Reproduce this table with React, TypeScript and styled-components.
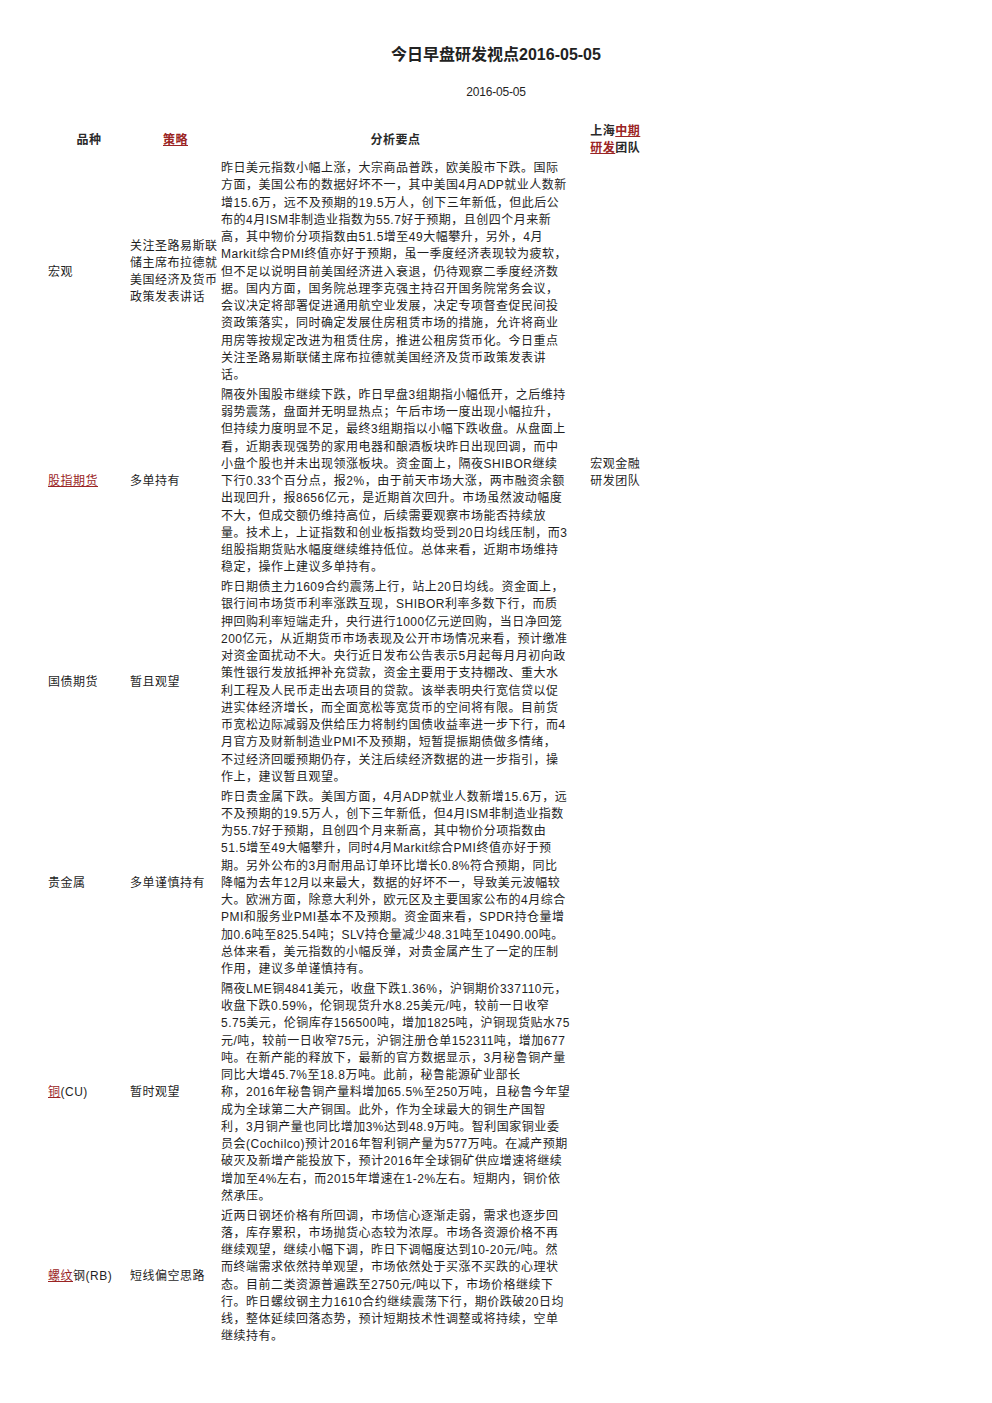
import React from "react";
import styled, { createGlobalStyle } from "styled-components";

const GlobalStyle = createGlobalStyle`
  html, body { margin: 0; padding: 0; background: #ffffff; }
  body {
    font-family: "Liberation Sans", "Noto Sans CJK SC", sans-serif;
    color: #1f1f1f;
  }
`;

const Page = styled.div`
  width: 992px;
  padding-top: 45px;
  padding-bottom: 40px;
`;

const Title = styled.h1`
  margin: 0;
  font-size: 16px;
  font-weight: 700;
  line-height: 20px;
  text-align: center;
  color: #222;
`;

const DateLine = styled.div`
  margin-top: 18.5px;
  font-size: 12px;
  line-height: 17px;
  text-align: center;
  letter-spacing: -0.2px;
`;

const Table = styled.table`
  margin-top: 22px;
  margin-left: 48px;
  border-collapse: collapse;
  table-layout: fixed;
  font-size: 12px;
  line-height: 17.25px;
  letter-spacing: 0.5px;
`;

const Col = styled.col<{ $w: number }>`
  width: ${(p) => p.$w}px;
`;

const Th = styled.th<{ $align?: string; $pr?: number }>`
  padding: 0.5px ${(p) => p.$pr || 0}px 2px 0;
  font-weight: 700;
  text-align: ${(p) => p.$align || "center"};
  vertical-align: middle;
  color: #2a2a2a;
`;

const Td = styled.td<{ $pr?: number }>`
  padding: 0.5px ${(p) => p.$pr || 0}px 2px 0;
  text-align: left;
  vertical-align: middle;
  white-space: nowrap;
`;

const Link = styled.span`
  color: #9a2424;
  text-decoration: underline;
`;

const Lines: React.FC<{ lines: string[] }> = ({ lines }) => (
  <>
    {lines.map((l, i) => (
      <React.Fragment key={i}>
        {l}
        {i < lines.length - 1 && <br />}
      </React.Fragment>
    ))}
  </>
);

type Row = {
  name: React.ReactNode;
  strategy: string[];
  text: string[];
};

const rows: Row[] = [
  {
    name: "宏观",
    strategy: ["关注圣路易斯联", "储主席布拉德就", "美国经济及货币", "政策发表讲话"],
    text: [
      "昨日美元指数小幅上涨，大宗商品普跌，欧美股市下跌。国际",
      "方面，美国公布的数据好坏不一，其中美国4月ADP就业人数新",
      "增15.6万，远不及预期的19.5万人，创下三年新低，但此后公",
      "布的4月ISM非制造业指数为55.7好于预期，且创四个月来新",
      "高，其中物价分项指数由51.5增至49大幅攀升，另外，4月",
      "Markit综合PMI终值亦好于预期，虽一季度经济表现较为疲软，",
      "但不足以说明目前美国经济进入衰退，仍待观察二季度经济数",
      "据。国内方面，国务院总理李克强主持召开国务院常务会议，",
      "会议决定将部署促进通用航空业发展，决定专项督查促民间投",
      "资政策落实，同时确定发展住房租赁市场的措施，允许将商业",
      "用房等按规定改进为租赁住房，推进公租房货币化。今日重点",
      "关注圣路易斯联储主席布拉德就美国经济及货币政策发表讲",
      "话。",
    ],
  },
  {
    name: <Link>股指期货</Link>,
    strategy: ["多单持有"],
    text: [
      "隔夜外围股市继续下跌，昨日早盘3组期指小幅低开，之后维持",
      "弱势震荡，盘面并无明显热点；午后市场一度出现小幅拉升，",
      "但持续力度明显不足，最终3组期指以小幅下跌收盘。从盘面上",
      "看，近期表现强势的家用电器和酿酒板块昨日出现回调，而中",
      "小盘个股也并未出现领涨板块。资金面上，隔夜SHIBOR继续",
      "下行0.33个百分点，报2%，由于前天市场大涨，两市融资余额",
      "出现回升，报8656亿元，是近期首次回升。市场虽然波动幅度",
      "不大，但成交额仍维持高位，后续需要观察市场能否持续放",
      "量。技术上，上证指数和创业板指数均受到20日均线压制，而3",
      "组股指期货贴水幅度继续维持低位。总体来看，近期市场维持",
      "稳定，操作上建议多单持有。",
    ],
  },
  {
    name: "国债期货",
    strategy: ["暂且观望"],
    text: [
      "昨日期债主力1609合约震荡上行，站上20日均线。资金面上，",
      "银行间市场货币利率涨跌互现，SHIBOR利率多数下行，而质",
      "押回购利率短端走升，央行进行1000亿元逆回购，当日净回笼",
      "200亿元，从近期货币市场表现及公开市场情况来看，预计缴准",
      "对资金面扰动不大。央行近日发布公告表示5月起每月月初向政",
      "策性银行发放抵押补充贷款，资金主要用于支持棚改、重大水",
      "利工程及人民币走出去项目的贷款。该举表明央行宽信贷以促",
      "进实体经济增长，而全面宽松等宽货币的空间将有限。目前货",
      "币宽松边际减弱及供给压力将制约国债收益率进一步下行，而4",
      "月官方及财新制造业PMI不及预期，短暂提振期债做多情绪，",
      "不过经济回暖预期仍存，关注后续经济数据的进一步指引，操",
      "作上，建议暂且观望。",
    ],
  },
  {
    name: "贵金属",
    strategy: ["多单谨慎持有"],
    text: [
      "昨日贵金属下跌。美国方面，4月ADP就业人数新增15.6万，远",
      "不及预期的19.5万人，创下三年新低，但4月ISM非制造业指数",
      "为55.7好于预期，且创四个月来新高，其中物价分项指数由",
      "51.5增至49大幅攀升，同时4月Markit综合PMI终值亦好于预",
      "期。另外公布的3月耐用品订单环比增长0.8%符合预期，同比",
      "降幅为去年12月以来最大，数据的好坏不一，导致美元波幅较",
      "大。欧洲方面，除意大利外，欧元区及主要国家公布的4月综合",
      "PMI和服务业PMI基本不及预期。资金面来看，SPDR持仓量增",
      "加0.6吨至825.54吨；SLV持仓量减少48.31吨至10490.00吨。",
      "总体来看，美元指数的小幅反弹，对贵金属产生了一定的压制",
      "作用，建议多单谨慎持有。",
    ],
  },
  {
    name: (
      <>
        <Link>铜</Link>(CU)
      </>
    ),
    strategy: ["暂时观望"],
    text: [
      "隔夜LME铜4841美元，收盘下跌1.36%，沪铜期价337110元，",
      "收盘下跌0.59%，伦铜现货升水8.25美元/吨，较前一日收窄",
      "5.75美元，伦铜库存156500吨，增加1825吨，沪铜现货贴水75",
      "元/吨，较前一日收窄75元，沪铜注册仓单152311吨，增加677",
      "吨。在新产能的释放下，最新的官方数据显示，3月秘鲁铜产量",
      "同比大增45.7%至18.8万吨。此前，秘鲁能源矿业部长",
      "称，2016年秘鲁铜产量料增加65.5%至250万吨，且秘鲁今年望",
      "成为全球第二大产铜国。此外，作为全球最大的铜生产国智",
      "利，3月铜产量也同比增加3%达到48.9万吨。智利国家铜业委",
      "员会(Cochilco)预计2016年智利铜产量为577万吨。在减产预期",
      "破灭及新增产能投放下，预计2016年全球铜矿供应增速将继续",
      "增加至4%左右，而2015年增速在1-2%左右。短期内，铜价依",
      "然承压。",
    ],
  },
  {
    name: (
      <>
        <Link>螺纹</Link>钢(RB)
      </>
    ),
    strategy: ["短线偏空思路"],
    text: [
      "近两日钢坯价格有所回调，市场信心逐渐走弱，需求也逐步回",
      "落，库存累积，市场抛货心态较为浓厚。市场各资源价格不再",
      "继续观望，继续小幅下调，昨日下调幅度达到10-20元/吨。然",
      "而终端需求依然持单观望，市场依然处于买涨不买跌的心理状",
      "态。目前二类资源普遍跌至2750元/吨以下，市场价格继续下",
      "行。昨日螺纹钢主力1610合约继续震荡下行，期价跌破20日均",
      "线，整体延续回落态势，预计短期技术性调整或将持续，空单",
      "继续持有。",
    ],
  },
];

export default function App() {
  return (
    <>
      <GlobalStyle />
      <Page>
        <Title>今日早盘研发视点2016-05-05</Title>
        <DateLine>2016-05-05</DateLine>
        <Table>
          <colgroup>
            <Col $w={82} />
            <Col $w={91} />
            <Col $w={366} />
            <Col $w={72} />
          </colgroup>
          <thead>
            <tr>
              <Th>品种</Th>
              <Th>
                <Link>策略</Link>
              </Th>
              <Th $pr={20}>分析要点</Th>
              <Th $align="left">
                上海<Link>中期</Link>
                <br />
                <Link>研发</Link>团队
              </Th>
            </tr>
          </thead>
          <tbody>
            {rows.map((r, i) => (
              <tr key={i}>
                <Td>{r.name}</Td>
                <Td>
                  <Lines lines={r.strategy} />
                </Td>
                <Td $pr={20}>
                  <Lines lines={r.text} />
                </Td>
                {i === 0 && (
                  <Td rowSpan={3}>
                    <Lines lines={["宏观金融", "研发团队"]} />
                  </Td>
                )}
                {i >= 3 && <Td />}
              </tr>
            ))}
          </tbody>
        </Table>
      </Page>
    </>
  );
}
